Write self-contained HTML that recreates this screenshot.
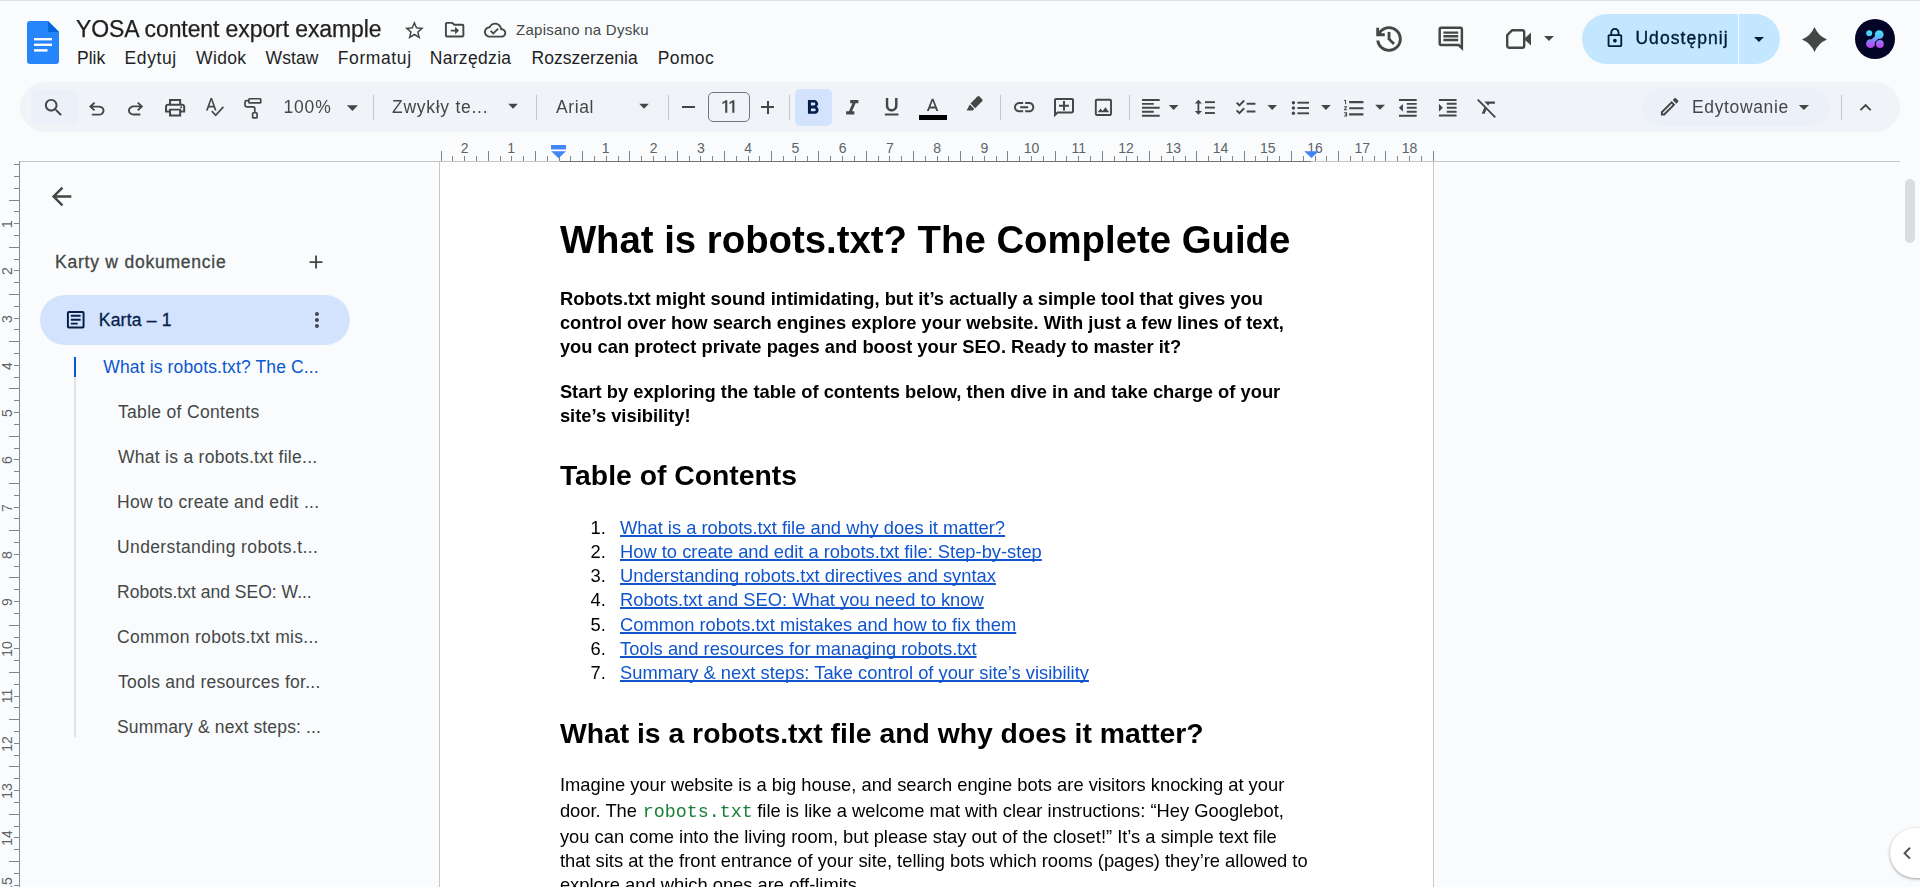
<!DOCTYPE html>
<html><head><meta charset="utf-8"><title>YOSA content export example</title><style>
*{box-sizing:border-box}
html,body{margin:0;padding:0}
body{width:1920px;height:887px;overflow:hidden;position:relative;background:#f9fbfd;font-family:"Liberation Sans",sans-serif;}
.a{position:absolute}
.t{position:absolute;white-space:pre;}
svg{position:absolute;overflow:visible}
</style></head>
<body>
<div class="a" style="left:439px;top:162px;width:995px;height:730px;background:#fff;border-left:1px solid #c7c7c7;border-right:1px solid #c7c7c7"></div>
<div class="a" style="left:1905px;top:179px;width:10px;height:64px;background:#dadce0;border-radius:5px"></div>
<div class="a" style="left:1890px;top:828px;width:60px;height:50px;background:#fff;border-radius:25px;box-shadow:0 1px 2px rgba(60,64,67,.3),0 1px 3px 1px rgba(60,64,67,.15)"></div>
<svg style="left:1895.36px;top:841.01px" width="24.48" height="24.48" viewBox="0 0 24 24" ><path fill="#50555c" d="M15.41 7.41L14 6l-6 6 6 6 1.41-1.41L10.83 12z"/></svg>
<div class="a" style="left:0px;top:0px;width:1920px;height:1px;background:#e0dfe3;"></div>
<svg style="left:27px;top:21px" width="32" height="43" viewBox="0 0 32 43"><path d="M3 0H21L32 11V40a3 3 0 0 1-3 3H3a3 3 0 0 1-3-3V3a3 3 0 0 1 3-3Z" fill="#2684fc"/><path d="M21 0L32 11H21Z" fill="#0066da"/><rect x="7" y="17" width="18" height="2.4" fill="#fff"/><rect x="7" y="22.6" width="18" height="2.4" fill="#fff"/><rect x="7" y="28.2" width="13.5" height="2.4" fill="#fff"/></svg>
<svg style="left:403.12px;top:19.09px" width="22.77" height="22.77" viewBox="0 0 24 24" ><path fill="#444746" d="M22 9.24l-7.19-.62L12 2 9.19 8.63 2 9.24l5.46 4.73L5.82 21 12 17.27 18.18 21l-1.63-7.03L22 9.24zM12 15.4l-3.76 2.27 1-4.28-3.32-2.88 4.38-.38L12 6.1l1.71 4.04 4.38.38-3.32 2.88 1 4.28L12 15.4z"/></svg>
<svg style="left:442.77px;top:18.38px" width="23.25" height="23.25" viewBox="0 0 24 24" ><path fill="#444746" d="M20 6h-8l-2-2H4c-1.1 0-2 .9-2 2v12c0 1.1.9 2 2 2h16c1.1 0 2-.9 2-2V8c0-1.1-.9-2-2-2zm0 12H4V6h5.17l2 2H20v10zm-7.5-1l4-4-4-4v3H8v2h4.5v3z"/></svg>
<svg style="left:483.63px;top:18.96px" width="22.24" height="22.24" viewBox="0 0 24 24" ><path fill="#444746" d="M19.35 10.04C18.67 6.59 15.64 4 12 4 9.11 4 6.6 5.64 5.35 8.04 2.34 8.36 0 10.91 0 14c0 3.31 2.69 6 6 6h13c2.76 0 5-2.24 5-5 0-2.64-2.05-4.78-4.65-4.96zM19 18H6c-2.21 0-4-1.79-4-4 0-2.05 1.53-3.76 3.56-3.97l1.07-.11.5-.95C8.08 7.14 9.94 6 12 6c2.62 0 4.88 1.86 5.39 4.43l.3 1.5 1.53.11c1.56.1 2.78 1.41 2.78 2.96 0 1.65-1.35 3-3 3zm-9-3.82l-2.09-2.09L6.5 13.5 10 17l6.01-6.01-1.41-1.41z"/></svg>
<svg style="left:1371.82px;top:22.07px" width="34.07" height="34.07" viewBox="0 0 24 24" ><path fill="#444746" d="M12 21q-3.45 0-6.013-2.288T3.05 13H5.1q.35 2.6 2.313 4.3T12 19q2.925 0 4.963-2.038T19 12q0-2.925-2.038-4.963T12 5q-1.725 0-3.225.8T6.25 8H9v2H3V4h2v2.35q1.275-1.6 3.113-2.475T12 3q1.875 0 3.513.713t2.85 1.924q1.212 1.213 1.925 2.85T21 12q0 1.875-.713 3.513t-1.924 2.85q-1.213 1.212-2.85 1.925T12 21Zm2.8-4.8L11 12.4V7h2v4.6l3.2 3.2-1.4 1.4Z"/></svg>
<svg style="left:1435.71px;top:23.86px" width="29.58" height="29.58" viewBox="0 0 24 24" ><path fill="#444746" d="M21.99 4c0-1.1-.89-2-1.99-2H4c-1.1 0-2 .9-2 2v12c0 1.1.9 2 2 2h14l4 4-.01-18zM20 4v13.17L18.83 16H4V4h16zM6 12h12v2H6zm0-3h12v2H6zm0-3h12v2H6z"/></svg>
<svg style="left:1506px;top:29px" width="25" height="20" viewBox="0 0 25 20"><path d="M6.2 1.2H16.2a2 2 0 0 1 2 2V16.8a2 2 0 0 1-2 2H3.2a2 2 0 0 1-2-2V6.2Z" fill="none" stroke="#444746" stroke-width="2.4" stroke-linejoin="round"/><path d="M18 10L25 3.5V16.5Z" fill="#444746"/></svg>
<svg style="left:0;top:0" width="1920" height="140" viewBox="0 0 1920 140"><path d="M1544.00 35.95H1553.95L1548.97 40.90Z" fill="#444746"/></svg>
<div class="a" style="left:1582px;top:14px;width:198px;height:50px;background:#c2e7ff;border-radius:25px"></div>
<div class="a" style="left:1738.2px;top:14px;width:1.3px;height:50px;background:#f9fbfd;"></div>
<svg style="left:1603.59px;top:26.79px" width="21.82" height="21.82" viewBox="0 0 24 24" ><path fill="#001d35" d="M18 8h-1V6c0-2.76-2.24-5-5-5S7 3.24 7 6v2H6c-1.1 0-2 .9-2 2v10c0 1.1.9 2 2 2h12c1.1 0 2-.9 2-2V10c0-1.1-.9-2-2-2zM9 6c0-1.66 1.34-3 3-3s3 1.34 3 3v2H9V6zm9 14H6V10h12v10zm-6-3c1.1 0 2-.9 2-2s-.9-2-2-2-2 .9-2 2 .9 2 2 2z"/></svg>
<svg style="left:0;top:0" width="1920" height="140" viewBox="0 0 1920 140"><path d="M1754.00 37.00H1763.95L1758.97 42.00Z" fill="#001d35"/></svg>
<svg style="left:1802.4px;top:26.5px" width="25.0" height="25.0" viewBox="0 0 24 24" ><path fill="#444746" d="M12 0A22.2 22.2 0 0 0 24 12A22.2 22.2 0 0 0 12 24A22.2 22.2 0 0 0 0 12A22.2 22.2 0 0 0 12 0Z"/></svg>
<svg style="left:1855px;top:18.75px" width="40" height="40" viewBox="0 0 40 40"><defs><linearGradient id="g1" gradientUnits="userSpaceOnUse" x1="0" y1="11" x2="0" y2="29"><stop offset="0" stop-color="#48e2f6"/><stop offset="0.35" stop-color="#4fc3f7"/><stop offset="0.6" stop-color="#8b7cf6"/><stop offset="1" stop-color="#c63cf3"/></linearGradient></defs><circle cx="20" cy="20" r="20" fill="#020526"/><g fill="url(#g1)"><circle cx="14.2" cy="14.2" r="3"/><circle cx="24.2" cy="15.6" r="4.4"/><circle cx="15.5" cy="24.7" r="4.4"/><circle cx="24.9" cy="25" r="3.9"/><path d="M20.6 17.6L22.4 19.6 18.9 23 17 21Z" stroke="url(#g1)" stroke-width="1.5" stroke-linejoin="round"/></g></svg>
<div class="a" style="left:20px;top:82px;width:1880px;height:50px;background:#f0f4f9;border-radius:25px"></div>
<div class="a" style="left:31px;top:90px;width:47px;height:34px;background:#ecf1f9;border-radius:4px"></div>
<div class="a" style="left:1641px;top:89px;width:189px;height:37px;background:#ecf1f9;border-radius:18.5px"></div>
<svg style="left:42.13px;top:95.81px" width="23.22" height="23.22" viewBox="0 0 24 24" ><path fill="#444746" d="M15.5 14h-.79l-.28-.27C15.41 12.59 16 11.11 16 9.5 16 5.91 13.09 3 9.5 3S3 5.91 3 9.5 5.91 16 9.5 16c1.61 0 3.09-.59 4.23-1.57l.27.28v.79l5 4.99L20.49 19l-4.99-5zm-6 0C7.01 14 5 11.99 5 9.5S7.01 5 9.5 5 14 7.01 14 9.5 11.99 14 9.5 14z"/></svg>
<svg style="left:88.9px;top:101.9px" width="15.50" height="13.60" viewBox="4 4 16 15" preserveAspectRatio="none"><path fill="#444746" d="M7 19v-2h7.1q1.575 0 2.737-1T18 13.5q0-1.5-1.163-2.5T14.1 10H7.8l2.6 2.6L9 14 4 9l5-5 1.4 1.4L7.8 8h6.3q2.425 0 4.163 1.575T20 13.5q0 2.35-1.737 3.925T14.1 19H7Z"/></svg>
<svg style="left:128px;top:101.9px" width="15.20" height="13.40" viewBox="4.0 4 16.0 15" preserveAspectRatio="none"><path fill="#444746" d="M9.9 19q-2.425 0-4.163-1.575T4 13.5q0-2.35 1.737-3.925T9.9 8h6.3l-2.6-2.6L15 4l5 5-5 5-1.4-1.4 2.6-2.6H9.9q-1.575 0-2.737 1T6 13.5Q6 15 7.163 16T9.9 17H17v2H9.9Z"/></svg>
<svg style="left:165px;top:99px" width="20.20" height="17.40" viewBox="2 3 20 18" preserveAspectRatio="none"><path fill="#444746" d="M19 8h-1V3H6v5H5c-1.66 0-3 1.34-3 3v6h4v4h12v-4h4v-6c0-1.66-1.34-3-3-3zM8 5h8v3H8V5zm8 14H8v-4h8v4zm2-4v-2H6v2H4v-4c0-.55.45-1 1-1h14c.55 0 1 .45 1 1v4h-2zM18 10.5a1 1 0 1 0 0 2 1 1 0 0 0 0-2z"/></svg>
<svg style="left:206px;top:97.8px" width="18.00" height="18.60" viewBox="2.46 3 20.54 19.5" preserveAspectRatio="none"><path fill="#444746" d="M12.45 16h2.09L9.43 3H7.57L2.46 16h2.09l1.12-3h5.64l1.14 3zm-6.02-5L8.5 5.48 10.57 11H6.43zm15.16.59l-8.09 8.09L9.83 16l-1.41 1.41 5.09 5.09L23 13l-1.41-1.41z"/></svg>
<svg style="left:236px;top:90px" width="40" height="35" viewBox="236 90 40 35"><g fill="none" stroke="#444746" stroke-width="1.7" stroke-linejoin="round"><rect x="248.85" y="98.75" width="11.9" height="4.2" rx="0.8"/><path d="M248.85 100.7H246.5a1.5 1.5 0 0 0-1.5 1.5V105.3a1.5 1.5 0 0 0 1.5 1.5H253.3a1.5 1.5 0 0 1 1.5 1.5V112.5"/><rect x="252.65" y="112.75" width="4.4" height="5.2" rx="0.8"/></g></svg>
<svg style="left:0;top:0" width="1920" height="140" viewBox="0 0 1920 140"><path d="M346.90 105.20H358.00L352.45 110.90Z" fill="#444746"/></svg>
<div class="a" style="left:373px;top:95px;width:1px;height:25px;background:#c7c7c7;"></div>
<div class="a" style="left:536px;top:95px;width:1px;height:25px;background:#c7c7c7;"></div>
<div class="a" style="left:668px;top:95px;width:1px;height:25px;background:#c7c7c7;"></div>
<div class="a" style="left:789px;top:95px;width:1px;height:25px;background:#c7c7c7;"></div>
<div class="a" style="left:1000px;top:95px;width:1px;height:25px;background:#c7c7c7;"></div>
<div class="a" style="left:1129px;top:95px;width:1px;height:25px;background:#c7c7c7;"></div>
<div class="a" style="left:1841px;top:95px;width:1px;height:25px;background:#c7c7c7;"></div>
<svg style="left:0;top:0" width="1920" height="140" viewBox="0 0 1920 140"><path d="M508.20 103.80H517.90L513.05 108.70Z" fill="#444746"/></svg>
<svg style="left:0;top:0" width="1920" height="140" viewBox="0 0 1920 140"><path d="M639.20 103.80H648.90L644.05 108.70Z" fill="#444746"/></svg>
<div class="a" style="left:682px;top:106px;width:13px;height:2px;background:#444746;"></div>
<div class="a" style="left:708px;top:92px;width:42px;height:29.7px;background:transparent;border:1.2px solid #747775;border-radius:5px"></div>
<svg style="left:0;top:0" width="1920" height="140" viewBox="0 0 1920 140"><path fill="#444746" d="M722.40 104.30V102.30L725.70 100.2H727.3V112.8H725.2V102.60ZM729.50 104.30V102.30L732.80 100.2H734.4V112.8H732.3V102.60Z"/></svg>
<div class="a" style="left:761px;top:106px;width:13px;height:2px;background:#444746;"></div>
<div class="a" style="left:766.5px;top:100.5px;width:2px;height:13px;background:#444746;"></div>
<div class="a" style="left:795px;top:89px;width:37px;height:37px;background:#d3e3fd;border-radius:5px"></div>
<svg style="left:800.86px;top:95.97px" width="23.79" height="23.79" viewBox="0 0 24 24" ><path fill="#041e49" d="M15.6 10.79c.97-.67 1.65-1.77 1.65-2.79 0-2.26-1.75-4-4-4H7v14h7.04c2.09 0 3.71-1.7 3.71-3.79 0-1.52-.86-2.82-2.15-3.42zM10 6.5h3c.83 0 1.5.67 1.5 1.5s-.67 1.5-1.5 1.5h-3v-3zm3.5 9H10v-3h3.5c.83 0 1.5.67 1.5 1.5s-.67 1.5-1.5 1.5z"/></svg>
<svg style="left:840.11px;top:95.63px" width="24.54" height="24.54" viewBox="0 0 24 24" ><path fill="#444746" d="M10 4v3h2.21l-3.42 8H6v3h8v-3h-2.21l3.42-8H18V4z"/></svg>
<svg style="left:880.33px;top:95.33px" width="23.33" height="23.33" viewBox="0 0 24 24" ><path fill="#444746" d="M12 17c3.31 0 6-2.69 6-6V3h-2.5v8c0 1.93-1.57 3.5-3.5 3.5S8.5 12.93 8.5 11V3H6v8c0 3.31 2.69 6 6 6zm-7 2v2h14v-2H5z"/></svg>
<svg style="left:922.27px;top:95.71px" width="21.23" height="21.23" viewBox="0 0 24 24" ><path fill="#444746" d="M11 3L5.5 17h2.25l1.12-3h6.25l1.12 3h2.25L13 3h-2zm-1.38 9L12 5.67 14.38 12H9.62z"/></svg>
<div class="a" style="left:918.75px;top:115px;width:28.25px;height:4.75px;background:#000;"></div>
<svg style="left:966px;top:95px" width="18" height="17" viewBox="0 0 18 17"><path d="M11.4 1.6a1.5 1.5 0 0 1 2.1 0l2.6 2.6a1.5 1.5 0 0 1 0 2.1L9.2 13.2 4.5 8.5Z" fill="#444746"/><path d="M3.8 9.4L8.3 13.9 6.6 15.6H0.6Z" fill="#444746"/></svg>
<svg style="left:1011.85px;top:95.47px" width="24.3" height="24.3" viewBox="0 0 24 24" ><path fill="#444746" d="M3.9 12c0-1.71 1.39-3.1 3.1-3.1h4V7H7c-2.76 0-5 2.24-5 5s2.24 5 5 5h4v-1.9H7c-1.71 0-3.1-1.39-3.1-3.1zM8 13h8v-2H8v2zm9-6h-4v1.9h4c1.71 0 3.1 1.39 3.1 3.1s-1.39 3.1-3.1 3.1h-4V17h4c2.76 0 5-2.24 5-5s-2.24-5-5-5z"/></svg>
<svg style="left:1053.75px;top:97.75px" width="20" height="19.25" viewBox="2 2 20 20" preserveAspectRatio="none"><g transform="translate(24,0) scale(-1,1)"><path fill="#444746" d="M22 4c0-1.1-.9-2-2-2H4c-1.1 0-2 .9-2 2v12c0 1.1.9 2 2 2h14l4 4V4zm-2 13.17L18.83 16H4V4h16v13.17zM13 5h-2v4H7v2h4v4h2v-4h4V9h-4z"/></g></svg>
<svg style="left:1091.96px;top:96.08px" width="22.83" height="22.83" viewBox="0 0 24 24" ><path fill="#444746" d="M19 5v14H5V5h14m0-2H5c-1.1 0-2 .9-2 2v14c0 1.1.9 2 2 2h14c1.1 0 2-.9 2-2V5c0-1.1-.9-2-2-2zm-4.86 8.86l-3 3.87L9 13.14 6 17h12l-3.86-5.14z"/></svg>
<svg style="left:1139.17px;top:95.92px" width="23.67" height="23.67" viewBox="0 0 24 24" ><path fill="#444746" d="M15 15H3v2h12v-2zm0-8H3v2h12V7zM3 13h18v-2H3v2zm0 8h18v-2H3v2zM3 3v2h18V3H3z"/></svg>
<svg style="left:0;top:0" width="1920" height="140" viewBox="0 0 1920 140"><path d="M1168.80 104.95H1178.50L1173.65 109.95Z" fill="#444746"/></svg>
<svg style="left:0;top:0" width="1920" height="140" viewBox="0 0 1920 140"><g fill="#444746"><rect x="1197.5" y="102.5" width="1.8" height="9.5"/><path d="M1194.8 103.4L1198.4 99.8L1202 103.4ZM1194.8 111.1L1198.4 114.7L1202 111.1Z"/><rect x="1205" y="101.2" width="9.9" height="1.9"/><rect x="1205" y="106.65" width="9.9" height="1.9"/><rect x="1205" y="112.05" width="9.9" height="1.9"/></g></svg>
<svg style="left:1234.11px;top:95.83px" width="23.39" height="23.39" viewBox="0 0 24 24" ><path fill="#444746" d="M22 7h-9v2h9V7zm0 8h-9v2h9v-2zM5.54 11L2 7.46l1.41-1.41 2.12 2.12 4.24-4.24 1.41 1.41L5.54 11zm0 8L2 15.46l1.41-1.41 2.12 2.12 4.24-4.24 1.41 1.41L5.54 19z"/></svg>
<svg style="left:0;top:0" width="1920" height="140" viewBox="0 0 1920 140"><path d="M1267.40 104.95H1277.00L1272.20 109.95Z" fill="#444746"/></svg>
<svg style="left:0;top:0" width="1920" height="140" viewBox="0 0 1920 140"><g fill="#444746"><circle cx="1293.4" cy="102.7" r="1.7"/><circle cx="1293.4" cy="108" r="1.7"/><circle cx="1293.4" cy="113.3" r="1.7"/><rect x="1297.4" y="101.75" width="11.6" height="1.9"/><rect x="1297.4" y="107.05" width="11.6" height="1.9"/><rect x="1297.4" y="112.35" width="11.6" height="1.9"/></g></svg>
<svg style="left:0;top:0" width="1920" height="140" viewBox="0 0 1920 140"><path d="M1321.10 104.95H1330.80L1325.95 109.95Z" fill="#444746"/></svg>
<svg style="left:1342.26px;top:95.5px" width="24.49" height="24.49" viewBox="0 0 24 24" ><path fill="#444746" d="M2 17h2v.5H3v1h1v.5H2v1h3v-4H2v1zm1-9h1V4H2v1h1v3zm-1 3h1.8L2 13.1v.9h3v-1H3.2L5 10.9V10H2v1zm5-6v2h14V5H7zm0 14h14v-2H7v2zm0-6h14v-2H7v2z"/></svg>
<svg style="left:0;top:0" width="1920" height="140" viewBox="0 0 1920 140"><path d="M1375.10 104.85H1385.00L1380.05 109.75Z" fill="#444746"/></svg>
<svg style="left:1396.17px;top:95.92px" width="23.67" height="23.67" viewBox="0 0 24 24" ><path fill="#444746" d="M11 17h10v-2H11v2zm-8-5l4 4V8l-4 4zm0 9h18v-2H3v2zM3 3v2h18V3H3zm8 6h10V7H11v2zm0 4h10v-2H11v2z"/></svg>
<svg style="left:1435.88px;top:96.0px" width="23.5" height="23.5" viewBox="0 0 24 24" ><path fill="#444746" d="M3 21h18v-2H3v2zM3 8v8l4-4-4-4zm8 9h10v-2H11v2zM3 3v2h18V3H3zm8 6h10V7H11v2zm0 4h10v-2H11v2z"/></svg>
<svg style="left:0;top:0" width="1920" height="140" viewBox="0 0 1920 140"><path d="M1477.8 99.6L1495.3 117.3" stroke="#444746" stroke-width="1.9" fill="none"/><path fill="#444746" d="M1484.3 101.4H1494.9V103.8H1489.3L1488.3 105.8ZM1484.3 107.2L1486.6 109.3L1484.6 113.7H1481.8Z"/></svg>
<svg style="left:1658.09px;top:94.82px" width="23.37" height="23.37" viewBox="0 0 24 24" ><path fill="#444746" d="M14.06 9.02l.92.92L5.92 19H5v-.92l9.06-9.06M17.66 3c-.25 0-.51.1-.7.29l-1.83 1.83 3.75 3.75 1.83-1.83c.39-.39.39-1.02 0-1.41l-2.34-2.34c-.2-.2-.45-.29-.71-.29zm-3.6 3.19L3 17.25V21h3.75L17.81 9.94l-3.75-3.75z"/></svg>
<svg style="left:0;top:0" width="1920" height="140" viewBox="0 0 1920 140"><path d="M1798.80 104.95H1809.00L1803.90 109.90Z" fill="#444746"/></svg>
<svg style="left:1853.74px;top:96.47px" width="23.13" height="23.13" viewBox="0 0 24 24" ><path fill="#444746" d="M12 8l-6 6 1.41 1.41L12 10.83l4.59 4.58L18 14z"/></svg>
<div class="a" style="left:19px;top:160.5px;width:1881px;height:1.5px;background:#c4c7c5;"></div>
<div class="a" style="left:560px;top:161px;width:751px;height:1px;background:#707274;"></div>
<svg style="left:0;top:0" width="1920" height="170" viewBox="0 0 1920 170"><rect x="441" y="151" width="1" height="10" fill="#828385"/><rect x="452" y="156" width="1" height="5" fill="#828385"/><rect x="464" y="156" width="1" height="5" fill="#828385"/><rect x="476" y="156" width="1" height="5" fill="#828385"/><rect x="488" y="151" width="1" height="10" fill="#828385"/><rect x="500" y="156" width="1" height="5" fill="#828385"/><rect x="511" y="156" width="1" height="5" fill="#828385"/><rect x="523" y="156" width="1" height="5" fill="#828385"/><rect x="535" y="151" width="1" height="10" fill="#828385"/><rect x="547" y="156" width="1" height="5" fill="#828385"/><rect x="559" y="156" width="1" height="5" fill="#828385"/><rect x="570" y="156" width="1" height="5" fill="#828385"/><rect x="582" y="151" width="1" height="10" fill="#828385"/><rect x="594" y="156" width="1" height="5" fill="#828385"/><rect x="606" y="156" width="1" height="5" fill="#828385"/><rect x="618" y="156" width="1" height="5" fill="#828385"/><rect x="629" y="151" width="1" height="10" fill="#828385"/><rect x="641" y="156" width="1" height="5" fill="#828385"/><rect x="653" y="156" width="1" height="5" fill="#828385"/><rect x="665" y="156" width="1" height="5" fill="#828385"/><rect x="677" y="151" width="1" height="10" fill="#828385"/><rect x="689" y="156" width="1" height="5" fill="#828385"/><rect x="700" y="156" width="1" height="5" fill="#828385"/><rect x="712" y="156" width="1" height="5" fill="#828385"/><rect x="724" y="151" width="1" height="10" fill="#828385"/><rect x="736" y="156" width="1" height="5" fill="#828385"/><rect x="748" y="156" width="1" height="5" fill="#828385"/><rect x="759" y="156" width="1" height="5" fill="#828385"/><rect x="771" y="151" width="1" height="10" fill="#828385"/><rect x="783" y="156" width="1" height="5" fill="#828385"/><rect x="795" y="156" width="1" height="5" fill="#828385"/><rect x="807" y="156" width="1" height="5" fill="#828385"/><rect x="818" y="151" width="1" height="10" fill="#828385"/><rect x="830" y="156" width="1" height="5" fill="#828385"/><rect x="842" y="156" width="1" height="5" fill="#828385"/><rect x="854" y="156" width="1" height="5" fill="#828385"/><rect x="866" y="151" width="1" height="10" fill="#828385"/><rect x="878" y="156" width="1" height="5" fill="#828385"/><rect x="889" y="156" width="1" height="5" fill="#828385"/><rect x="901" y="156" width="1" height="5" fill="#828385"/><rect x="913" y="151" width="1" height="10" fill="#828385"/><rect x="925" y="156" width="1" height="5" fill="#828385"/><rect x="937" y="156" width="1" height="5" fill="#828385"/><rect x="948" y="156" width="1" height="5" fill="#828385"/><rect x="960" y="151" width="1" height="10" fill="#828385"/><rect x="972" y="156" width="1" height="5" fill="#828385"/><rect x="984" y="156" width="1" height="5" fill="#828385"/><rect x="996" y="156" width="1" height="5" fill="#828385"/><rect x="1007" y="151" width="1" height="10" fill="#828385"/><rect x="1019" y="156" width="1" height="5" fill="#828385"/><rect x="1031" y="156" width="1" height="5" fill="#828385"/><rect x="1043" y="156" width="1" height="5" fill="#828385"/><rect x="1055" y="151" width="1" height="10" fill="#828385"/><rect x="1066" y="156" width="1" height="5" fill="#828385"/><rect x="1078" y="156" width="1" height="5" fill="#828385"/><rect x="1090" y="156" width="1" height="5" fill="#828385"/><rect x="1102" y="151" width="1" height="10" fill="#828385"/><rect x="1114" y="156" width="1" height="5" fill="#828385"/><rect x="1126" y="156" width="1" height="5" fill="#828385"/><rect x="1137" y="156" width="1" height="5" fill="#828385"/><rect x="1149" y="151" width="1" height="10" fill="#828385"/><rect x="1161" y="156" width="1" height="5" fill="#828385"/><rect x="1173" y="156" width="1" height="5" fill="#828385"/><rect x="1185" y="156" width="1" height="5" fill="#828385"/><rect x="1196" y="151" width="1" height="10" fill="#828385"/><rect x="1208" y="156" width="1" height="5" fill="#828385"/><rect x="1220" y="156" width="1" height="5" fill="#828385"/><rect x="1232" y="156" width="1" height="5" fill="#828385"/><rect x="1244" y="151" width="1" height="10" fill="#828385"/><rect x="1255" y="156" width="1" height="5" fill="#828385"/><rect x="1267" y="156" width="1" height="5" fill="#828385"/><rect x="1279" y="156" width="1" height="5" fill="#828385"/><rect x="1291" y="151" width="1" height="10" fill="#828385"/><rect x="1303" y="156" width="1" height="5" fill="#828385"/><rect x="1315" y="156" width="1" height="5" fill="#828385"/><rect x="1326" y="156" width="1" height="5" fill="#828385"/><rect x="1338" y="151" width="1" height="10" fill="#828385"/><rect x="1350" y="156" width="1" height="5" fill="#828385"/><rect x="1362" y="156" width="1" height="5" fill="#828385"/><rect x="1374" y="156" width="1" height="5" fill="#828385"/><rect x="1385" y="151" width="1" height="10" fill="#828385"/><rect x="1397" y="156" width="1" height="5" fill="#828385"/><rect x="1409" y="156" width="1" height="5" fill="#828385"/><rect x="1421" y="156" width="1" height="5" fill="#828385"/><rect x="1433" y="151" width="1" height="10" fill="#828385"/></svg>
<svg style="left:0;top:0;z-index:3" width="1920" height="170" viewBox="0 0 1920 170"><rect x="551" y="145" width="15" height="4.4" fill="#4285f4"/><path d="M551.2 151.2H566L558.6 158.2Z" fill="#4285f4"/><path d="M1304.2 151.2H1318.8L1311.5 158Z" fill="#4285f4"/></svg>
<div class="a" style="left:19px;top:161px;width:1.3px;height:726px;background:#8a8d8f;"></div>
<svg style="left:0;top:0" width="20" height="887" viewBox="0 0 20 887"><rect x="14" y="164" width="5" height="1" fill="#828385"/><rect x="14" y="176" width="5" height="1" fill="#828385"/><rect x="14" y="188" width="5" height="1" fill="#828385"/><rect x="9" y="200" width="10" height="1" fill="#828385"/><rect x="14" y="211" width="5" height="1" fill="#828385"/><rect x="14" y="223" width="5" height="1" fill="#828385"/><rect x="14" y="235" width="5" height="1" fill="#828385"/><rect x="9" y="247" width="10" height="1" fill="#828385"/><rect x="14" y="259" width="5" height="1" fill="#828385"/><rect x="14" y="270" width="5" height="1" fill="#828385"/><rect x="14" y="282" width="5" height="1" fill="#828385"/><rect x="9" y="294" width="10" height="1" fill="#828385"/><rect x="14" y="306" width="5" height="1" fill="#828385"/><rect x="14" y="318" width="5" height="1" fill="#828385"/><rect x="14" y="329" width="5" height="1" fill="#828385"/><rect x="9" y="341" width="10" height="1" fill="#828385"/><rect x="14" y="353" width="5" height="1" fill="#828385"/><rect x="14" y="365" width="5" height="1" fill="#828385"/><rect x="14" y="377" width="5" height="1" fill="#828385"/><rect x="9" y="388" width="10" height="1" fill="#828385"/><rect x="14" y="400" width="5" height="1" fill="#828385"/><rect x="14" y="412" width="5" height="1" fill="#828385"/><rect x="14" y="424" width="5" height="1" fill="#828385"/><rect x="9" y="436" width="10" height="1" fill="#828385"/><rect x="14" y="448" width="5" height="1" fill="#828385"/><rect x="14" y="459" width="5" height="1" fill="#828385"/><rect x="14" y="471" width="5" height="1" fill="#828385"/><rect x="9" y="483" width="10" height="1" fill="#828385"/><rect x="14" y="495" width="5" height="1" fill="#828385"/><rect x="14" y="507" width="5" height="1" fill="#828385"/><rect x="14" y="518" width="5" height="1" fill="#828385"/><rect x="9" y="530" width="10" height="1" fill="#828385"/><rect x="14" y="542" width="5" height="1" fill="#828385"/><rect x="14" y="554" width="5" height="1" fill="#828385"/><rect x="14" y="566" width="5" height="1" fill="#828385"/><rect x="9" y="577" width="10" height="1" fill="#828385"/><rect x="14" y="589" width="5" height="1" fill="#828385"/><rect x="14" y="601" width="5" height="1" fill="#828385"/><rect x="14" y="613" width="5" height="1" fill="#828385"/><rect x="9" y="625" width="10" height="1" fill="#828385"/><rect x="14" y="637" width="5" height="1" fill="#828385"/><rect x="14" y="648" width="5" height="1" fill="#828385"/><rect x="14" y="660" width="5" height="1" fill="#828385"/><rect x="9" y="672" width="10" height="1" fill="#828385"/><rect x="14" y="684" width="5" height="1" fill="#828385"/><rect x="14" y="696" width="5" height="1" fill="#828385"/><rect x="14" y="707" width="5" height="1" fill="#828385"/><rect x="9" y="719" width="10" height="1" fill="#828385"/><rect x="14" y="731" width="5" height="1" fill="#828385"/><rect x="14" y="743" width="5" height="1" fill="#828385"/><rect x="14" y="755" width="5" height="1" fill="#828385"/><rect x="9" y="766" width="10" height="1" fill="#828385"/><rect x="14" y="778" width="5" height="1" fill="#828385"/><rect x="14" y="790" width="5" height="1" fill="#828385"/><rect x="14" y="802" width="5" height="1" fill="#828385"/><rect x="9" y="814" width="10" height="1" fill="#828385"/><rect x="14" y="826" width="5" height="1" fill="#828385"/><rect x="14" y="837" width="5" height="1" fill="#828385"/><rect x="14" y="849" width="5" height="1" fill="#828385"/><rect x="9" y="861" width="10" height="1" fill="#828385"/><rect x="14" y="873" width="5" height="1" fill="#828385"/><rect x="14" y="885" width="5" height="1" fill="#828385"/></svg>
<span class="t" style="left:7.3px;top:224.04px;font-size:14px;line-height:14px;color:#5f6368;transform:translate(-50%,-50%) rotate(-90deg);">1</span>
<span class="t" style="left:7.3px;top:271.29px;font-size:14px;line-height:14px;color:#5f6368;transform:translate(-50%,-50%) rotate(-90deg);">2</span>
<span class="t" style="left:7.3px;top:318.53px;font-size:14px;line-height:14px;color:#5f6368;transform:translate(-50%,-50%) rotate(-90deg);">3</span>
<span class="t" style="left:7.3px;top:365.78px;font-size:14px;line-height:14px;color:#5f6368;transform:translate(-50%,-50%) rotate(-90deg);">4</span>
<span class="t" style="left:7.3px;top:413.02px;font-size:14px;line-height:14px;color:#5f6368;transform:translate(-50%,-50%) rotate(-90deg);">5</span>
<span class="t" style="left:7.3px;top:460.26px;font-size:14px;line-height:14px;color:#5f6368;transform:translate(-50%,-50%) rotate(-90deg);">6</span>
<span class="t" style="left:7.3px;top:507.51px;font-size:14px;line-height:14px;color:#5f6368;transform:translate(-50%,-50%) rotate(-90deg);">7</span>
<span class="t" style="left:7.3px;top:554.75px;font-size:14px;line-height:14px;color:#5f6368;transform:translate(-50%,-50%) rotate(-90deg);">8</span>
<span class="t" style="left:7.3px;top:602.00px;font-size:14px;line-height:14px;color:#5f6368;transform:translate(-50%,-50%) rotate(-90deg);">9</span>
<span class="t" style="left:7.3px;top:649.24px;font-size:14px;line-height:14px;color:#5f6368;transform:translate(-50%,-50%) rotate(-90deg);">10</span>
<span class="t" style="left:7.3px;top:696.48px;font-size:14px;line-height:14px;color:#5f6368;transform:translate(-50%,-50%) rotate(-90deg);">11</span>
<span class="t" style="left:7.3px;top:743.73px;font-size:14px;line-height:14px;color:#5f6368;transform:translate(-50%,-50%) rotate(-90deg);">12</span>
<span class="t" style="left:7.3px;top:790.97px;font-size:14px;line-height:14px;color:#5f6368;transform:translate(-50%,-50%) rotate(-90deg);">13</span>
<span class="t" style="left:7.3px;top:838.22px;font-size:14px;line-height:14px;color:#5f6368;transform:translate(-50%,-50%) rotate(-90deg);">14</span>
<span class="t" style="left:7.3px;top:885.46px;font-size:14px;line-height:14px;color:#5f6368;transform:translate(-50%,-50%) rotate(-90deg);">15</span>
<svg style="left:46.61px;top:182.46px" width="29.17" height="29.17" viewBox="0 0 24 24" ><path fill="#444746" d="M20 11H7.83l5.59-5.59L12 4l-8 8 8 8 1.41-1.41L7.83 13H20v-2z"/></svg>
<svg style="left:305.44px;top:251.34px" width="22.11" height="22.11" viewBox="0 0 24 24" ><path fill="#444746" d="M19 13h-6v6h-2v-6H5v-2h6V5h2v6h6v2z"/></svg>
<div class="a" style="left:40px;top:295px;width:310px;height:50px;background:#d3e3fd;border-radius:25px"></div>
<svg style="left:63.67px;top:307.77px" width="23.47" height="23.47" viewBox="0 0 24 24" ><path fill="#041e49" d="M19 5v14H5V5h14m0-2H5c-1.1 0-2 .9-2 2v14c0 1.1.9 2 2 2h14c1.1 0 2-.9 2-2V5c0-1.1-.9-2-2-2zm-5 14H7v-2h7v2zm3-4H7v-2h10v2zm0-4H7V7h10v2z"/></svg>
<svg style="left:304.54px;top:307.59px" width="23.92" height="23.92" viewBox="0 0 24 24" ><path fill="#444746" d="M12 8c1.1 0 2-.9 2-2s-.9-2-2-2-2 .9-2 2 .9 2 2 2zm0 2c-1.1 0-2 .9-2 2s.9 2 2 2 2-.9 2-2-.9-2-2-2zm0 6c-1.1 0-2 .9-2 2s.9 2 2 2 2-.9 2-2-.9-2-2-2z"/></svg>
<div class="a" style="left:74px;top:357px;width:2px;height:380px;background:#dfe1e5;"></div>
<div class="a" style="left:74px;top:357px;width:2px;height:20px;background:#0b57d0;"></div>
<span class="t" style="left:605.56px;top:138px;font-size:14px;line-height:20px;color:#5f6368;transform:translateX(-50%);">1</span>
<span class="t" style="left:653.61px;top:138px;font-size:14px;line-height:20px;color:#5f6368;transform:translateX(-50%);">2</span>
<span class="t" style="left:700.85px;top:138px;font-size:14px;line-height:20px;color:#5f6368;transform:translateX(-50%);">3</span>
<span class="t" style="left:748.10px;top:138px;font-size:14px;line-height:20px;color:#5f6368;transform:translateX(-50%);">4</span>
<span class="t" style="left:795.34px;top:138px;font-size:14px;line-height:20px;color:#5f6368;transform:translateX(-50%);">5</span>
<span class="t" style="left:842.58px;top:138px;font-size:14px;line-height:20px;color:#5f6368;transform:translateX(-50%);">6</span>
<span class="t" style="left:889.83px;top:138px;font-size:14px;line-height:20px;color:#5f6368;transform:translateX(-50%);">7</span>
<span class="t" style="left:937.07px;top:138px;font-size:14px;line-height:20px;color:#5f6368;transform:translateX(-50%);">8</span>
<span class="t" style="left:984.32px;top:138px;font-size:14px;line-height:20px;color:#5f6368;transform:translateX(-50%);">9</span>
<span class="t" style="left:1031.56px;top:138px;font-size:14px;line-height:20px;color:#5f6368;transform:translateX(-50%);">10</span>
<span class="t" style="left:1078.80px;top:138px;font-size:14px;line-height:20px;color:#5f6368;transform:translateX(-50%);">11</span>
<span class="t" style="left:1126.05px;top:138px;font-size:14px;line-height:20px;color:#5f6368;transform:translateX(-50%);">12</span>
<span class="t" style="left:1173.29px;top:138px;font-size:14px;line-height:20px;color:#5f6368;transform:translateX(-50%);">13</span>
<span class="t" style="left:1220.54px;top:138px;font-size:14px;line-height:20px;color:#5f6368;transform:translateX(-50%);">14</span>
<span class="t" style="left:1267.78px;top:138px;font-size:14px;line-height:20px;color:#5f6368;transform:translateX(-50%);">15</span>
<span class="t" style="left:1315.02px;top:138px;font-size:14px;line-height:20px;color:#5f6368;transform:translateX(-50%);">16</span>
<span class="t" style="left:1362.27px;top:138px;font-size:14px;line-height:20px;color:#5f6368;transform:translateX(-50%);">17</span>
<span class="t" style="left:1409.51px;top:138px;font-size:14px;line-height:20px;color:#5f6368;transform:translateX(-50%);">18</span>
<span class="t" style="left:511.08px;top:138px;font-size:14px;line-height:20px;color:#5f6368;transform:translateX(-50%);">1</span>
<span class="t" style="left:464.63px;top:138px;font-size:14px;line-height:20px;color:#5f6368;transform:translateX(-50%);">2</span>
<span class="t" style="left:77.00px;top:46px;font-size:17.5px;line-height:24px;color:#1f1f1f;letter-spacing:0.0px;">Plik</span>
<span class="t" style="left:124.60px;top:46px;font-size:17.5px;line-height:24px;color:#1f1f1f;letter-spacing:0.6px;">Edytuj</span>
<span class="t" style="left:196.00px;top:46px;font-size:17.5px;line-height:24px;color:#1f1f1f;letter-spacing:0.375px;">Widok</span>
<span class="t" style="left:265.60px;top:46px;font-size:17.5px;line-height:24px;color:#1f1f1f;letter-spacing:0.1px;">Wstaw</span>
<span class="t" style="left:337.75px;top:46px;font-size:17.5px;line-height:24px;color:#1f1f1f;letter-spacing:0.607px;">Formatuj</span>
<span class="t" style="left:429.70px;top:46px;font-size:17.5px;line-height:24px;color:#1f1f1f;letter-spacing:0.325px;">Narzędzia</span>
<span class="t" style="left:531.50px;top:46px;font-size:17.5px;line-height:24px;color:#1f1f1f;letter-spacing:0.009px;">Rozszerzenia</span>
<span class="t" style="left:657.80px;top:46px;font-size:17.5px;line-height:24px;color:#1f1f1f;letter-spacing:0.35px;">Pomoc</span>
<span class="t" style="left:516.00px;top:19px;font-size:15px;line-height:21px;color:#444746;letter-spacing:0.262px;">Zapisano na Dysku</span>
<span class="t" style="left:55.00px;top:250px;font-size:17.5px;line-height:24px;color:#444746;letter-spacing:0.776px;-webkit-text-stroke:0.3px #444746;">Karty w dokumencie</span>
<span class="t" style="left:98.80px;top:308px;font-size:17.5px;line-height:24px;color:#041e49;letter-spacing:0.2px;-webkit-text-stroke:0.3px #041e49;">Karta – 1</span>
<span class="t" style="left:103.30px;top:355px;font-size:17.5px;line-height:24px;color:#0b57d0;letter-spacing:0.137px;">What is robots.txt? The C...</span>
<span class="t" style="left:118.00px;top:400px;font-size:17.5px;line-height:24px;color:#444746;letter-spacing:0.312px;">Table of Contents</span>
<span class="t" style="left:118.00px;top:445px;font-size:17.5px;line-height:24px;color:#444746;letter-spacing:0.281px;">What is a robots.txt file...</span>
<span class="t" style="left:117.00px;top:490px;font-size:17.5px;line-height:24px;color:#444746;letter-spacing:0.304px;">How to create and edit ...</span>
<span class="t" style="left:117.00px;top:535px;font-size:17.5px;line-height:24px;color:#444746;letter-spacing:0.383px;">Understanding robots.t...</span>
<span class="t" style="left:117.00px;top:580px;font-size:17.5px;line-height:24px;color:#444746;letter-spacing:0.009px;">Robots.txt and SEO: W...</span>
<span class="t" style="left:117.00px;top:625px;font-size:17.5px;line-height:24px;color:#444746;letter-spacing:0.304px;">Common robots.txt mis...</span>
<span class="t" style="left:118.00px;top:670px;font-size:17.5px;line-height:24px;color:#444746;letter-spacing:0.272px;">Tools and resources for...</span>
<span class="t" style="left:117.00px;top:715px;font-size:17.5px;line-height:24px;color:#444746;letter-spacing:0.15px;">Summary &amp; next steps: ...</span>
<div class="a" style="left:0;top:0;width:1920px;height:887px;will-change:transform">
<span class="t" style="left:76.00px;top:14px;font-size:23px;line-height:30px;color:#1f1f1f;letter-spacing:-0.096px;-webkit-text-stroke:0.25px #1f1f1f;">YOSA content export example</span>
<span class="t" style="left:283.40px;top:95px;font-size:17.5px;line-height:24px;color:#444746;letter-spacing:0.867px;">100%</span>
<span class="t" style="left:392.00px;top:95px;font-size:17.5px;line-height:24px;color:#444746;letter-spacing:0.727px;">Zwykły te...</span>
<span class="t" style="left:556.00px;top:95px;font-size:17.5px;line-height:24px;color:#444746;letter-spacing:0.625px;">Arial</span>
<span class="t" style="left:1692.00px;top:95px;font-size:17.5px;line-height:24px;color:#444746;letter-spacing:0.633px;">Edytowanie</span>
<span class="t" style="left:1635.40px;top:26px;font-size:17.5px;line-height:24px;color:#001d35;letter-spacing:1.067px;-webkit-text-stroke:0.35px #001d35;">Udostępnij</span>
<span class="t" style="left:559.90px;top:216px;font-size:38.333px;line-height:47px;font-weight:700;color:#000;">What is robots.txt? The Complete Guide</span>
<span class="t" style="left:559.90px;top:286px;font-size:18.333px;line-height:25px;font-weight:700;color:#000;">Robots.txt might sound intimidating, but it’s actually a simple tool that gives you</span>
<span class="t" style="left:559.90px;top:310px;font-size:18.333px;line-height:25px;font-weight:700;color:#000;">control over how search engines explore your website. With just a few lines of text,</span>
<span class="t" style="left:559.90px;top:334px;font-size:18.333px;line-height:25px;font-weight:700;color:#000;">you can protect private pages and boost your SEO. Ready to master it?</span>
<span class="t" style="left:559.90px;top:379px;font-size:18.333px;line-height:25px;font-weight:700;color:#000;">Start by exploring the table of contents below, then dive in and take charge of your</span>
<span class="t" style="left:559.90px;top:403px;font-size:18.333px;line-height:25px;font-weight:700;color:#000;">site’s visibility!</span>
<span class="t" style="left:559.90px;top:457px;font-size:28.333px;line-height:36px;font-weight:700;color:#000;">Table of Contents</span>
<span class="t" style="left:590.60px;top:515px;font-size:18.333px;line-height:25px;color:#000;">1.</span>
<span class="t" style="left:620.00px;top:515px;font-size:18.333px;line-height:25px;color:#1155cc;text-decoration:underline;text-decoration-thickness:2px;text-underline-offset:1px;text-decoration-skip-ink:none;">What is a robots.txt file and why does it matter?</span>
<span class="t" style="left:590.60px;top:539px;font-size:18.333px;line-height:25px;color:#000;">2.</span>
<span class="t" style="left:620.00px;top:539px;font-size:18.333px;line-height:25px;color:#1155cc;text-decoration:underline;text-decoration-thickness:2px;text-underline-offset:1px;text-decoration-skip-ink:none;">How to create and edit a robots.txt file: Step-by-step</span>
<span class="t" style="left:590.60px;top:563px;font-size:18.333px;line-height:25px;color:#000;">3.</span>
<span class="t" style="left:620.00px;top:563px;font-size:18.333px;line-height:25px;color:#1155cc;text-decoration:underline;text-decoration-thickness:2px;text-underline-offset:1px;text-decoration-skip-ink:none;">Understanding robots.txt directives and syntax</span>
<span class="t" style="left:590.60px;top:587px;font-size:18.333px;line-height:25px;color:#000;">4.</span>
<span class="t" style="left:620.00px;top:587px;font-size:18.333px;line-height:25px;color:#1155cc;text-decoration:underline;text-decoration-thickness:2px;text-underline-offset:1px;text-decoration-skip-ink:none;">Robots.txt and SEO: What you need to know</span>
<span class="t" style="left:590.60px;top:612px;font-size:18.333px;line-height:25px;color:#000;">5.</span>
<span class="t" style="left:620.00px;top:612px;font-size:18.333px;line-height:25px;color:#1155cc;text-decoration:underline;text-decoration-thickness:2px;text-underline-offset:1px;text-decoration-skip-ink:none;">Common robots.txt mistakes and how to fix them</span>
<span class="t" style="left:590.60px;top:636px;font-size:18.333px;line-height:25px;color:#000;">6.</span>
<span class="t" style="left:620.00px;top:636px;font-size:18.333px;line-height:25px;color:#1155cc;text-decoration:underline;text-decoration-thickness:2px;text-underline-offset:1px;text-decoration-skip-ink:none;">Tools and resources for managing robots.txt</span>
<span class="t" style="left:590.60px;top:660px;font-size:18.333px;line-height:25px;color:#000;">7.</span>
<span class="t" style="left:620.00px;top:660px;font-size:18.333px;line-height:25px;color:#1155cc;text-decoration:underline;text-decoration-thickness:2px;text-underline-offset:1px;text-decoration-skip-ink:none;">Summary &amp; next steps: Take control of your site’s visibility</span>
<span class="t" style="left:559.90px;top:715px;font-size:28.333px;line-height:36px;font-weight:700;color:#000;">What is a robots.txt file and why does it matter?</span>
<span class="t" style="left:559.90px;top:772px;font-size:18.333px;line-height:25px;color:#000;">Imagine your website is a big house, and search engine bots are visitors knocking at your</span>
<span class="t" style="left:559.90px;top:798px;font-size:18.333px;line-height:25px;color:#000;">door. The </span>
<span class="t" style="left:642.80px;top:800px;font-size:18.333px;line-height:25px;color:#188038;font-family:'Liberation Mono',monospace;">robots.txt</span>
<span class="t" style="left:752.20px;top:798px;font-size:18.333px;line-height:25px;color:#000;"> file is like a welcome mat with clear instructions: “Hey Googlebot,</span>
<span class="t" style="left:559.90px;top:824px;font-size:18.333px;line-height:25px;color:#000;">you can come into the living room, but please stay out of the closet!” It’s a simple text file</span>
<span class="t" style="left:559.90px;top:848px;font-size:18.333px;line-height:25px;color:#000;">that sits at the front entrance of your site, telling bots which rooms (pages) they’re allowed to</span>
<span class="t" style="left:559.90px;top:872px;font-size:18.333px;line-height:25px;color:#000;">explore and which ones are off-limits.</span>
</div>
</body></html>
